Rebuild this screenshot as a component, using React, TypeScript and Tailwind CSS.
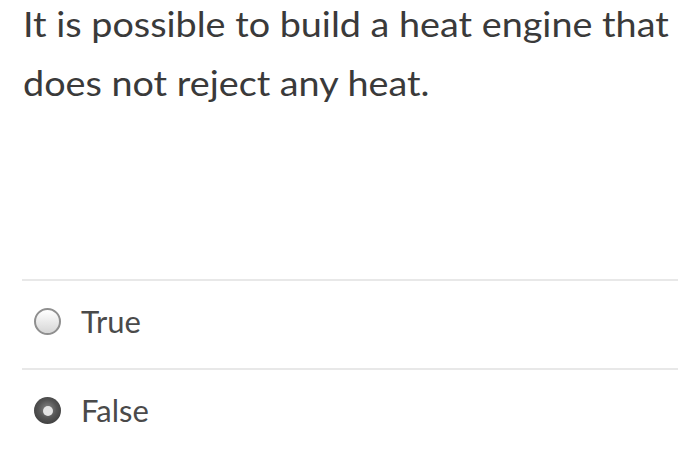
import React from "react";

const Radio = ({ checked }: { checked: boolean }) =>
  checked ? (
    <span className="w-[27px] h-[27px] rounded-full bg-[radial-gradient(circle_at_50%_45%,#8a8a8a_0%,#555_45%,#2f2f2f_100%)] flex items-center justify-center shrink-0">
      <span className="w-[10px] h-[10px] rounded-full bg-[#e4e4e4]" />
    </span>
  ) : (
    <span className="w-[27px] h-[27px] rounded-full border-2 border-[#8f8f8f] bg-[linear-gradient(#ffffff,#d6d6d6)] shrink-0" />
  );

export default function App() {
  const options = [
    { label: "True", checked: false },
    { label: "False", checked: true },
  ];
  return (
    <div className="w-[700px] h-[463px] bg-white overflow-hidden font-['Lato',sans-serif] text-[#3a3a3a]">
      {/* photo is stretched a bit sideways */}
      <p className="w-[600px] ml-[23px] mt-[-6px] text-[34px] leading-[59px] origin-left scale-x-[1.11]">
        It is possible to build a heat engine that does not reject any heat.
      </p>
      <div className="mt-[167px] ml-[22px] mr-[22px]">
        {options.map((o) => (
          <div key={o.label} className="border-t-2 border-[#e8e8e8] h-[89px] flex items-center gap-[20px] pl-[12px] pb-[6px]">
            <Radio checked={o.checked} />
            <span className="text-[31px] text-[#4a4a4a]">{o.label}</span>
          </div>
        ))}
      </div>
    </div>
  );
}
